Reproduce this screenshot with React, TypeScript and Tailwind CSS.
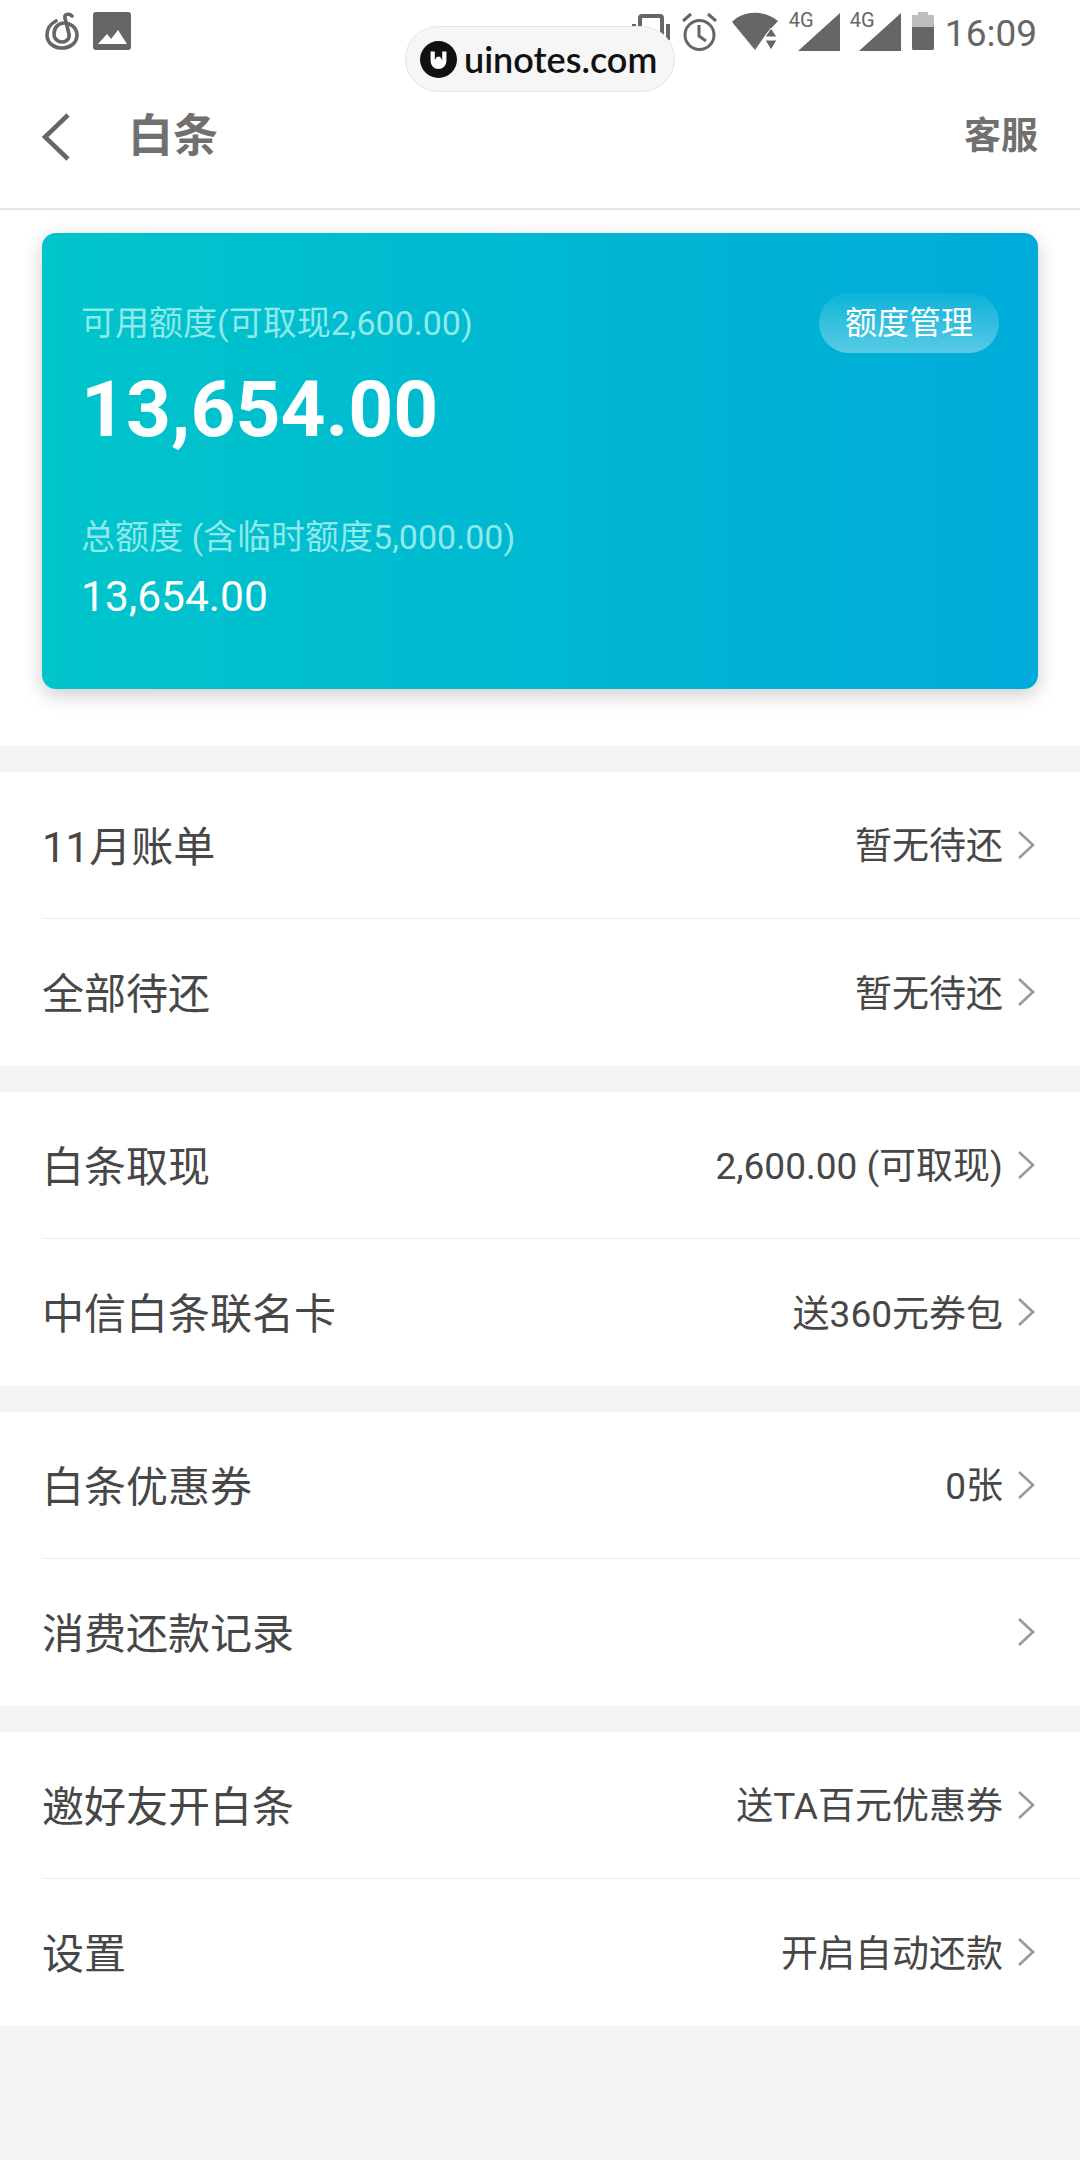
const sections = [
  [
    { label: "11月账单", value: "暂无待还" },
    { label: "全部待还", value: "暂无待还" },
  ],
  [
    { label: "白条取现", value: "2,600.00 (可取现)" },
    { label: "中信白条联名卡", value: "送360元券包" },
  ],
  [
    { label: "白条优惠券", value: "0张" },
    { label: "消费还款记录", value: "" },
  ],
  [
    { label: "邀好友开白条", value: "送TA百元优惠券" },
    { label: "设置", value: "开启自动还款" },
  ],
];

function Signal() {
  return (
    <div className="relative w-[52px] h-[40px]">
      <svg width="52" height="40" viewBox="0 0 52 40" className="absolute left-0 top-0">
        <path d="M9 39 L51 1 V39 Z" fill="#666" />
      </svg>
      <span className="absolute left-0 top-[-3px] text-[20px] leading-[22px] text-[#666]">4G</span>
    </div>
  );
}

function StatusBar() {
  return (
    <div className="h-[70px] pl-[45px] pr-[43px] pt-[12px] flex justify-between items-start">
      <div className="flex gap-[14px]">
        <svg width="34" height="38" viewBox="0 0 34 38" fill="none" stroke="#666" strokeWidth="3.6" strokeLinecap="round">
          <path d="M11 9 C5 12 2 17 2 23 C2 31 9 36 17 36 C25 36 32 31 32 23 C32 16 26 11 19 11 C13 11 9 16 9 22 C9 27 13 30 17 30 C21 30 25 27 24 22 L20 6 C19 2 24 1 27 4" />
        </svg>
        <svg width="38" height="38" viewBox="0 0 38 38">
          <rect width="38" height="38" rx="3" fill="#666" />
          <path d="M5 32 L14 22 L18 27 L25 18 L34 32 Z" fill="#fff" />
        </svg>
      </div>
      <div className="flex items-start">
        <svg width="40" height="38" viewBox="0 0 40 38" fill="none" stroke="#666" strokeWidth="4" className="mt-[2px]">
          <rect x="9" y="2" width="22" height="34" rx="2" />
          <path d="M3 10 V26 M37 10 V26" />
        </svg>
        <svg width="37" height="39" viewBox="0 0 37 39" fill="none" stroke="#666" strokeWidth="3" className="ml-[10px]">
          <circle cx="18.5" cy="23" r="14.5" />
          <path d="M18 13 V24 L25 29 M2 9 L10 2 M35 9 L27 2" />
        </svg>
        <svg width="46" height="38" viewBox="0 0 46 38" className="ml-[14px]">
          <path d="M0 10 C12 -2 32 -2 46 9 L34 22 L23 38 Z" fill="#666" />
          <path d="M33 25 L39 16 L45 25 Z M33 28 H45 L39 38 Z" fill="#666" stroke="#fff" strokeWidth="1" />
        </svg>
        <div className="ml-[11px]">
          <Signal />
        </div>
        <div className="ml-[9px]">
          <Signal />
        </div>
        <svg width="22" height="38" viewBox="0 0 22 38" className="ml-[10px]">
          <path d="M6 0 H16 V3 H22 V38 H0 V3 H6 Z" fill="#bdbdbd" />
          <path d="M0 15 H22 V36 a2 2 0 0 1 -2 2 H2 a2 2 0 0 1 -2 -2 Z" fill="#666" />
        </svg>
        <span className="ml-[11px] text-[37px] leading-[44px] text-[#666]">16:09</span>
      </div>
    </div>
  );
}

function Chevron() {
  return (
    <svg width="18" height="32" viewBox="0 0 18 32" fill="none" stroke="#999" strokeWidth="2.6" className="mt-[-3px]">
      <path d="M2 2 L16 15 L2 28" />
    </svg>
  );
}

function Row({ label, value, divider }: { label: string; value: string; divider: boolean }) {
  return (
    <div className="pl-[42px]">
      <div className={"h-[147px] pr-[45px] pt-[4px] flex items-center justify-between " + (divider ? "border-b border-[#ececec]" : "")}>
        <span className="text-[42px] text-[#474747]">{label}</span>
        <div className="flex items-center gap-[14px]">
          <span className="text-[37px] text-[#474747]">{value}</span>
          <Chevron />
        </div>
      </div>
    </div>
  );
}

export default function App() {
  return (
    <div
      className="relative w-[1080px] h-[2160px] bg-[#f5f5f5] overflow-hidden"
      style={{ fontFamily: 'Roboto, "Noto Sans CJK SC", sans-serif' }}
    >
      <div className="absolute left-[405px] top-[26px] w-[270px] h-[66px] rounded-[33px] bg-[#f6f6f6] border border-[#e4e4e4] flex items-center pl-[14px] gap-[7px] z-10">
        <svg width="37" height="37" viewBox="0 0 35 35">
          <circle cx="17.5" cy="17.5" r="17.5" fill="#111" />
          <path d="M10 10 V19 a7.5 7.5 0 0 0 15 0 V10 H21 V18 L19 15 H16 L14 18 V10 Z" fill="#fff" />
        </svg>
        <span className="text-[36px] font-semibold text-[#111]" style={{ fontFamily: "Lato, sans-serif" }}>
          uinotes.com
        </span>
      </div>

      <div className="bg-white">
        <StatusBar />
        <div className="h-[140px] pl-[41px] pr-[42px] pb-[5px] flex items-center justify-between border-b-2 border-[#e6e6e6]">
          <div className="flex items-center">
            <svg width="30" height="50" viewBox="0 0 30 50" fill="none" stroke="#666" strokeWidth="4.5">
              <path d="M27 3 L4 25 L27 47" />
            </svg>
            <span className="ml-[57px] text-[45px] font-bold text-[#707070]">白条</span>
          </div>
          <span className="text-[37px] font-bold text-[#707070]">客服</span>
        </div>
        <div className="h-[536px] pl-[42px] pr-[42px] pt-[23px]">
          <div className="h-[456px] rounded-[14px] bg-gradient-to-r from-[#00c5ca] to-[#00abd9] shadow-[0_6px_20px_rgba(0,0,0,0.2)] pl-[39px] pr-[39px] pt-[60px] flex justify-between items-start">
            <div className="mt-[10px]">
              <div className="text-[34px] leading-[40px] text-[#8fe8ea]">可用额度(可取现2,600.00)</div>
              <div className="text-[78.5px] leading-[90px] mt-[21px] font-bold text-white">13,654.00</div>
              <div className="text-[34px] leading-[40px] mt-[63px] text-[#8fe8ea]">总额度 (含临时额度5,000.00)</div>
              <div className="text-[42.5px] leading-[50px] mt-[15px] text-white">13,654.00</div>
            </div>
            <div className="h-[60px] w-[180px] rounded-[30px] bg-gradient-to-b from-white/5 to-white/35 flex items-center justify-center text-[32px] text-white">
              额度管理
            </div>
          </div>
        </div>
      </div>

      <div className="flex flex-col gap-[26px] pt-[26px]">
        {sections.map((rows, i) => (
          <div key={i} className="bg-white">
            {rows.map((row, j) => (
              <Row key={row.label} label={row.label} value={row.value} divider={j === 0} />
            ))}
          </div>
        ))}
      </div>
    </div>
  );
}
